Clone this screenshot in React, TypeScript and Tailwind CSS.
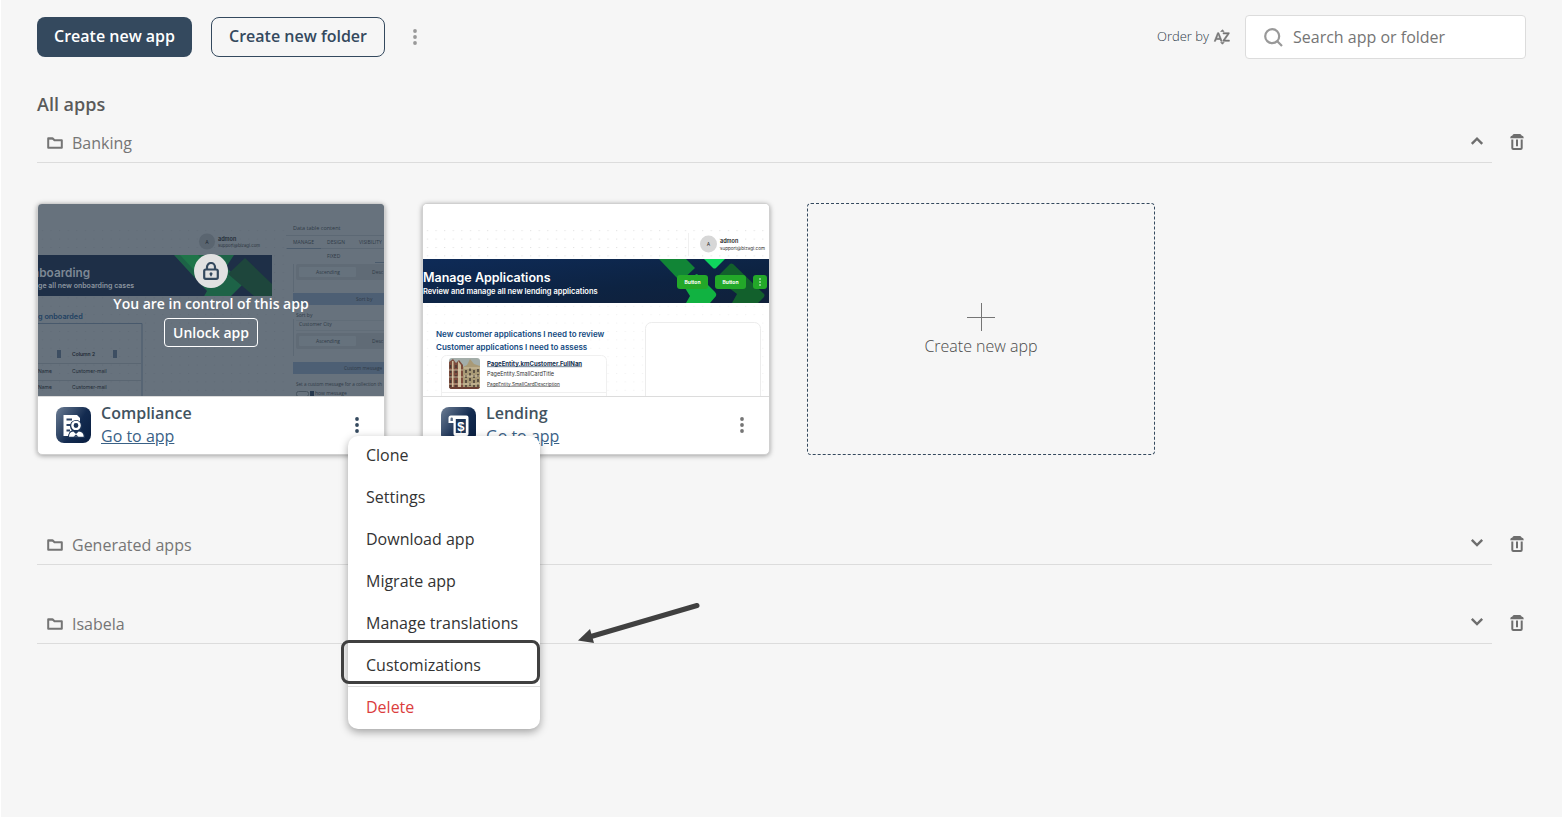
import React from "react";
import { MdSortByAlpha } from "react-icons/md";

function Dots({ className }: { className: string }) {
  return (
    <svg width="4" height="16" viewBox="0 0 4 16" fill="currentColor" className={className} aria-hidden="true">
      <circle cx="2" cy="2" r="1.9" />
      <circle cx="2" cy="8" r="1.9" />
      <circle cx="2" cy="14" r="1.9" />
    </svg>
  );
}

function FolderIcon() {
  return (
    <svg width="16" height="12" viewBox="0 0 16 12" fill="none" stroke="#757575" strokeWidth="2" strokeLinejoin="round" aria-hidden="true">
      <path d="M1.200 1.200h4.300l2 2h7.300v7.600H1.200z" />
      <path d="M1.200 1.800h5" strokeWidth="1.500" />
    </svg>
  );
}

function TrashIcon() {
  return (
    <svg width="14" height="16" viewBox="0 0 14 16" fill="none" stroke="#6e6e6e" strokeWidth="2" aria-hidden="true">
      <path d="M2.400 1.600Q2.800 0 4 0h6q1.200 0 1.600 1.600Q13.800 1.900 13.800 4.300H.2Q.2 1.900 2.400 1.600z" fill="#6e6e6e" stroke="none" />
      <path d="M2.300 5.500V14q0 1 1 1h7.400q1 0 1-1V5.500M7 5.500v6.700" />
    </svg>
  );
}

function Chevron({ open }: { open: boolean }) {
  return (
    <svg width="14" height="10" viewBox="0 0 14 10" fill="none" stroke="#6e6e6e" strokeWidth="2.400" className="mb-1" aria-hidden="true">
      {open ? <path d="M1.800 7.800 7 2.600l5.200 5.200" /> : <path d="M1.800 1.800 7 7l5.200-5.200" />}
    </svg>
  );
}

function DotGrid({ id, color }: { id: string; color: string }) {
  return (
    <pattern id={id} width="8.600" height="8.400" patternUnits="userSpaceOnUse" x="0" y="1">
      <rect x="4" y="0" width="1" height="1" fill={color} />
    </pattern>
  );
}

function CompliancePreview() {
  return (
    <svg viewBox="0 0 347 192" preserveAspectRatio="xMinYMin slice" className="block h-full w-full" fontFamily="Inter, sans-serif" aria-hidden="true">
      <defs>
        <DotGrid id="dotsA" color="#5e6974" />
        <clipPath id="bannerA"><rect x="0" y="51" width="234" height="41" /></clipPath>
      </defs>
      <rect width="347" height="192" fill="#67727d" />
      <rect y="22" width="250" height="170" fill="url(#dotsA)" />
      <circle cx="169" cy="37.500" r="8" fill="#5a6570" />
      <text x="169" y="39.500" fontSize="5" fill="#242d38" textAnchor="middle">A</text>
      <text x="180" y="37" fontSize="5.500" fontWeight="600" fill="#222b36">admon</text>
      <text x="180" y="43" fontSize="4.300" fill="#2c3540">support@bizagi.com</text>
      <g clipPath="url(#bannerA)">
        <rect y="51" width="234" height="41" fill="#1e2f47" />
        <path d="M136 51h60l-8 12 17 17-14 14h-26l4-7z" fill="#1d6347" />
        <path d="m190 70 17-16 27 26v12h-18z" fill="#1e463c" />
        <path d="m160 51 14 18-6 10-26-28z" fill="#1e7549" />
      </g>
      <text x="-6" y="73" fontSize="11.800" fontWeight="600" fill="#7d8894">nboarding</text>
      <text x="0" y="84" fontSize="7" fontWeight="600" fill="#8a949f">ge all new onboarding cases</text>
      <text x="0" y="115" fontSize="7.300" fontWeight="600" fill="#1f4162">g onboarded</text>
      <path d="M0 119.500h104V192" fill="none" stroke="#48596c" strokeWidth="1" />
      <path d="M0 159.500h103M0 176.500h103" stroke="#5a6672" />
      <rect x="19" y="146" width="4" height="8" fill="#3d4e62" />
      <rect x="75" y="146" width="4" height="8" fill="#3d4e62" />
      <g fontSize="5" fill="#222b36">
        <text x="34" y="152" fontWeight="600">Column 2</text>
        <text x="0" y="169">Name</text>
        <text x="34" y="169">Customer-mail</text>
        <text x="0" y="185">Name</text>
        <text x="34" y="185">Customer-mail</text>
      </g>
      <rect x="248" y="0" width="99" height="192" fill="#67727d" />
      <g fontFamily="'Open Sans', sans-serif" fontSize="5" fill="#303b47">
        <text x="255" y="25.500" fontSize="5.500">Data table content</text>
        <path d="M248 31.500h99M248 44.500h99M255.500 60v28M255.500 115v37" stroke="#5c6874" fill="none" />
        <path d="M249 44.500h34M337 58.500h10" stroke="#4b5b6c" />
        <text x="255" y="39.500">MANAGE</text>
        <text x="289" y="39.500">DESIGN</text>
        <text x="321" y="39.500">VISIBILITY</text>
        <text x="289" y="53.500">FIXED</text>
        <rect x="258" y="60" width="89" height="16" rx="2" fill="#606b76" />
        <rect x="261" y="63" width="57" height="10" rx="1" fill="#66727d" />
        <text x="278" y="69.500">Ascending</text>
        <text x="334" y="69.500">Desc</text>
        <rect x="255" y="89" width="92" height="12" fill="#4d5f74" />
        <text x="318" y="97">Sort by</text>
        <text x="258" y="113">Sort by</text>
        <path d="M258 116.500h89M258 126.500h89" stroke="#616d78" />
        <text x="261" y="122">Customer City</text>
        <rect x="258" y="129" width="89" height="16" rx="2" fill="#606b76" />
        <rect x="261" y="132" width="57" height="10" rx="1" fill="#66727d" />
        <text x="278" y="139">Ascending</text>
        <text x="334" y="139">Desc</text>
        <rect x="255" y="158" width="92" height="12" fill="#4d5f74" />
        <text x="306" y="166" fontSize="4.800">Custom message</text>
        <text x="258" y="182" fontSize="4.600">Set a custom message for a collection th</text>
        <rect x="258.500" y="187.500" width="12" height="5" rx="2" fill="none" stroke="#48545f" />
        <rect x="272" y="187" width="4" height="5" fill="#26384d" />
        <text x="277" y="191">how message</text>
      </g>
    </svg>
  );
}

function LendingPreview() {
  return (
    <svg viewBox="0 0 347 192" preserveAspectRatio="xMinYMin slice" className="block h-full w-full" fontFamily="Inter, sans-serif" aria-hidden="true">
      <defs>
        <DotGrid id="dotsB" color="#dcdcdc" />
        <linearGradient id="navy" x1="0" y1="0" x2="1" y2="1">
          <stop offset="0" stopColor="#0e2b58" />
          <stop offset="0.600" stopColor="#0d2342" />
          <stop offset="1" stopColor="#10203a" />
        </linearGradient>
        <clipPath id="bannerB"><rect x="0" y="55" width="347" height="44" /></clipPath>
        <clipPath id="photo"><rect x="26" y="154" width="31" height="31" rx="3" /></clipPath>
      </defs>
      <rect width="347" height="192" fill="#fff" />
      <rect y="26" width="347" height="29" fill="url(#dotsB)" />
      <rect y="99" width="347" height="93" fill="url(#dotsB)" opacity="0.450" />
      <path d="M265.500 29v23" stroke="#f0f0f0" />
      <circle cx="285.500" cy="40" r="8.500" fill="#d7d7d7" />
      <text x="285.500" y="42" fontSize="5" fill="#333" textAnchor="middle">A</text>
      <text x="297" y="39" fontSize="5.500" fontWeight="600" fill="#222">admon</text>
      <text x="297" y="46" fontSize="4.600" fill="#333">support@bizagi.com</text>
      <g clipPath="url(#bannerB)">
        <rect y="55" width="347" height="44" fill="url(#navy)" />
        <path d="M236 55h27l9 9-13 12q-2 1-4-1z" fill="#118536" />
        <path d="M281 55h21l-9 9q-1.500 1-3 0z" fill="#0fd65e" />
        <path d="M263 75l11-5 18 18q2 2 1 4l-6 7h-24l4-7-5-8z" fill="#12bb41" opacity="0.950" />
        <path d="M293 74l14-14q1-1 3 0l31 30q1 1 0 3l-6 6h-26l5-9z" fill="#12602c" />
      </g>
      <text x="0" y="78" fontSize="12.500" fontWeight="600" fill="#fff">Manage Applications</text>
      <text x="0" y="90" fontSize="7.500" fontWeight="600" fill="#fff">Review and manage all new lending applications</text>
      <rect x="254" y="71" width="31" height="14" rx="3" fill="#23a829" />
      <rect x="292" y="71" width="31" height="14" rx="3" fill="#23a829" />
      <rect x="330" y="71" width="14" height="14" rx="3" fill="#23a829" />
      <g fontSize="5" fontWeight="700" fill="#fff" textAnchor="middle">
        <text x="269.500" y="80">Button</text>
        <text x="307.500" y="80">Button</text>
      </g>
      <g fill="#fff">
        <circle cx="337" cy="75" r="0.800" />
        <circle cx="337" cy="78" r="0.800" />
        <circle cx="337" cy="81" r="0.800" />
      </g>
      <g fontSize="8" fontWeight="600" fill="#10487e">
        <text x="13" y="133">New customer applications I need to review</text>
        <text x="13" y="145.500">Customer applications I need to assess</text>
      </g>
      <rect x="18.500" y="151.500" width="165" height="60" rx="5" fill="#fff" stroke="#f0f0f0" />
      <path d="M19 188.500h164" stroke="#f0f0f0" />
      <rect x="222.500" y="118.500" width="115" height="90" rx="6" fill="#fff" stroke="#ececec" />
      <g clipPath="url(#photo)">
        <rect x="26" y="154" width="31" height="31" fill="#a3ada9" />
        <path d="M26 158l4-3 3 4 3-3 4 5v24H26z" fill="#7d4c3d" />
        <path d="M40 163l4-2 3-6 4 5 6 2v23H40z" fill="#a99a76" />
        <path d="M35 157l3 4v24h-3zM29 157h1.500v28H29z" fill="#cdbd9b" />
        <path d="M27.500 161v22M33 161v22M43 166v17M47 164v19M51 166v17M55 165v18" stroke="#453a35" strokeWidth="1.500" strokeDasharray="3 2" />
        <path d="M26 166h14M26 173h14M26 180h31M41 164h16M41 172h16" stroke="#ddcfb0" strokeWidth="0.800" />
        <path d="M26 184h31" stroke="#6b3f34" strokeWidth="2" />
      </g>
      <g fontSize="5">
        <text x="64" y="161.500" fontSize="6" fontWeight="700" fill="#14304f" textDecoration="underline">PageEntity.kmCustomer.FullNan</text>
        <text x="64" y="172" fontSize="5.500" fill="#333">PageEntity.SmallCardTitle</text>
        <text x="64" y="181.500" fontSize="4.700" fill="#333" textDecoration="underline">PageEntity.SmallCardDescription</text>
      </g>
    </svg>
  );
}

function TileGradient({ id }: { id: string }) {
  return (
    <linearGradient id={id} x1="0" y1="0" x2="1" y2="0.700">
      <stop offset="0" stopColor="#6c7d94" />
      <stop offset="0.650" stopColor="#132b50" />
      <stop offset="1" stopColor="#0b2144" />
    </linearGradient>
  );
}

function ComplianceLogo() {
  return (
    <svg width="35" height="36" viewBox="0 0 35 36" aria-hidden="true">
      <defs><TileGradient id="tileA" /></defs>
      <rect width="35" height="36" rx="8" fill="url(#tileA)" />
      <path d="M7.500 8H21l3 3v6l-8 12H7.500z" fill="#fff" />
      <path d="M10.500 12.500H16M10.500 18h4M10.500 23.500h3.500" stroke="#2a4163" strokeWidth="2.200" />
      <path d="M14 19.500a6 6 0 0 1 12-1q0 4-3 6h-6q-3-2-3-5z" fill="#1d3456" />
      <circle cx="20" cy="18.500" r="3.600" fill="#1d3456" stroke="#fff" strokeWidth="2.400" />
      <path d="M12 31q0-8 6-8h4q7 0 7 8z" fill="#1d3456" />
      <path d="M13 29.800q0-4.800 4.300-5.300l2.700 2.500 2.700-2.500q5 .5 5 5.300z" fill="#fff" />
      <path d="M17.500 29.800 20 27.500l2.500 2.300z" fill="#1d3456" />
    </svg>
  );
}

function LendingLogo() {
  return (
    <svg width="35" height="36" viewBox="0 0 35 36" aria-hidden="true">
      <defs><TileGradient id="tileB" /></defs>
      <rect width="35" height="36" rx="8" fill="url(#tileB)" />
      <path d="M10 8.500h15.500q2 0 2 2V27q0 2-2 2h-11q-2 0-2-2V16h-5v-5q0-2.500 2.500-2.500z" fill="#fff" />
      <path d="M9.500 14v-2.200a1.200 1.200 0 0 1 2.400 0V14z" fill="#5a6c86" />
      <rect x="14.800" y="12" width="10" height="14" fill="#1d3557" />
      <text x="19.800" y="23.500" fontFamily="'Liberation Sans', sans-serif" fontSize="13" fontWeight="700" fill="#fff" textAnchor="middle">$</text>
    </svg>
  );
}

function FolderRow({ name, open }: { name: string; open: boolean }) {
  return (
    <div className="flex items-center gap-4">
      <button type="button" aria-expanded={open} className="flex h-[39px] flex-1 items-center border-b border-[#dcdcdc] pr-2 pl-2.5 text-left">
        <FolderIcon />
        <span className="ml-[9px] flex-1 text-base text-[#757575]">{name}</span>
        <Chevron open={open} />
      </button>
      <button type="button" aria-label={`Delete ${name}`} className="flex w-[18px] justify-center pb-1">
        <TrashIcon />
      </button>
    </div>
  );
}

const menuItems = ["Clone", "Settings", "Download app", "Migrate app", "Manage translations", "Customizations"];

function AppMenu() {
  return (
    <div role="menu" className="absolute top-full left-0 z-10 w-48 rounded-[10px] bg-white text-base leading-6 text-[#333] shadow-[0_3px_8px_rgba(0,0,0,0.350)]">
      <div className="flex flex-col gap-[18px] pt-[7px] pb-[9px]">
        {menuItems.map((item) => (
          <button key={item} type="button" role="menuitem" className="relative pl-[18px] text-left whitespace-nowrap">
            {item}
            {item === "Customizations" && (
              <span className="pointer-events-none absolute -top-[13px] right-0 -bottom-[7px] -left-[7px] rounded-lg border-3 border-[#404040]" />
            )}
          </button>
        ))}
      </div>
      <div className="flex border-t border-[#dcdcdc] pt-2 pb-2.5">
        <button type="button" role="menuitem" className="flex-1 pl-[18px] text-left text-[#db3d3d]">Delete</button>
      </div>
      <svg width="124" height="42" viewBox="0 0 124 42" className="pointer-events-none absolute top-[166px] left-[229px]" aria-hidden="true">
        <path d="M120 3.500 14 34.500" stroke="#404040" strokeWidth="5" strokeLinecap="round" />
        <path d="M1 38.500 13 27l4 14z" fill="#404040" />
      </svg>
    </div>
  );
}

type CardProps = {
  name: string;
  logo: React.ReactNode;
  preview: React.ReactNode;
  locked?: boolean;
  menuOpen?: boolean;
};

function AppCard({ name, logo, preview, locked, menuOpen }: CardProps) {
  return (
    <article className="w-[348px] rounded-[5px] border border-[#d0d0d0] bg-white shadow-[0_1px_5px_rgba(0,0,0,0.350)]">
      <div className="relative h-48 overflow-hidden rounded-t-[4px]">
        {preview}
        {locked && (
          <div className="absolute inset-0 flex flex-col items-center pt-[50px] text-sm font-semibold text-white">
            <span className="flex size-[34px] shrink-0 items-center justify-center rounded-full bg-[#e1e1e1]">
              <svg width="16" height="18" viewBox="0 0 16 18" fill="none" stroke="#34495e" strokeWidth="2.200" aria-hidden="true">
                <rect x="1.200" y="7.500" width="13.600" height="9.300" rx="1.500" />
                <path d="M4 7.500V5a4 4 0 0 1 8 0v2.500" />
                <circle cx="8" cy="11.700" r="1.500" fill="#34495e" stroke="none" />
                <path d="M8 12v2.200" strokeWidth="1.500" />
              </svg>
            </span>
            <span className="mt-1.5 leading-5 whitespace-nowrap">You are in control of this app</span>
            <button type="button" className="mt-1 h-[29px] rounded-[4px] border border-white px-2">Unlock app</button>
          </div>
        )}
      </div>
      <div className="flex h-[58px] items-center border-t border-[#dcdcdc] pr-[18px] pb-0.5 pl-[18px]">
        {logo}
        <div className="ml-2.5 flex flex-1 flex-col items-start text-base leading-[23px]">
          <h2 className="font-semibold text-[#42535f]">{name}</h2>
          <a href="#" className="text-[#3a6186] underline">Go to app</a>
        </div>
        <div className="relative">
          <button type="button" aria-label={`${name} options`} aria-expanded={!!menuOpen} className="flex h-[22px] w-[18px] items-center justify-center">
            <Dots className={menuOpen ? "text-[#34495e]" : "text-[#757575]"} />
          </button>
          {menuOpen && <AppMenu />}
        </div>
      </div>
    </article>
  );
}

export default function App() {
  return (
    <div className="min-h-screen border-l border-white bg-[#f6f6f6] pt-[15px] pr-9 pb-10 pl-9 font-['Open_Sans',sans-serif]">
      <header className="flex h-11 items-center justify-between">
        <div className="flex items-center">
          <button type="button" className="h-10 rounded-lg bg-[#34495e] px-[17px] pb-0.5 text-base font-semibold text-white">Create new app</button>
          <button type="button" className="ml-[19px] h-10 rounded-lg border border-[#34495e] px-[17px] pb-0.5 text-base font-semibold text-[#34495e]">Create new folder</button>
          <button type="button" aria-label="More options" className="ml-5 flex h-8 w-5 items-center justify-center">
            <Dots className="text-[#999]" />
          </button>
        </div>
        <div className="flex items-center">
          <button type="button" className="mr-3.5 flex items-center gap-1 text-[13px] text-[#2c3947]">
            <span className="font-light">Order by</span>
            <MdSortByAlpha size={18} color="#757575" className="[&>path:last-child]:stroke-[#757575] [&>path:last-child]:[stroke-width:0.8]" />
          </button>
          <label className="flex h-11 w-[281px] items-center rounded-[4px] border border-[#dcdcdc] bg-white pl-[18px]">
            <svg width="19" height="19" viewBox="0 0 19 19" fill="none" stroke="#999" strokeWidth="2.200" aria-hidden="true">
              <circle cx="8.200" cy="8.200" r="7" />
              <path d="m13.300 13.300 4.700 4.700" />
            </svg>
            <input type="text" aria-label="Search app or folder" placeholder="Search app or folder" className="ml-2.5 min-w-0 flex-1 bg-transparent text-base outline-none placeholder:text-[#757575]" />
          </label>
        </div>
      </header>

      <main className="mt-[33px]">
        <h1 className="mb-2 text-lg leading-6 font-semibold text-[#5a5a5a]">All apps</h1>
        <FolderRow name="Banking" open />
        <section className="flex flex-wrap gap-[37px] pt-10 pb-[71px]">
          <AppCard name="Compliance" logo={<ComplianceLogo />} preview={<CompliancePreview />} locked menuOpen />
          <AppCard name="Lending" logo={<LendingLogo />} preview={<LendingPreview />} />
          <button type="button" className="flex h-[252px] w-[348px] flex-col items-center justify-center gap-[3px] rounded-[4px] border border-dashed border-[#34495e] pt-0.5 text-base font-light text-[#4a4a4a]">
            <svg width="28" height="28" viewBox="0 0 28 28" stroke="#757575" aria-hidden="true">
              <path d="M14.500 0v28M0 14.500h28" />
            </svg>
            Create new app
          </button>
        </section>
        <div className="flex flex-col gap-10">
          <FolderRow name="Generated apps" open={false} />
          <FolderRow name="Isabela" open={false} />
        </div>
      </main>
    </div>
  );
}
